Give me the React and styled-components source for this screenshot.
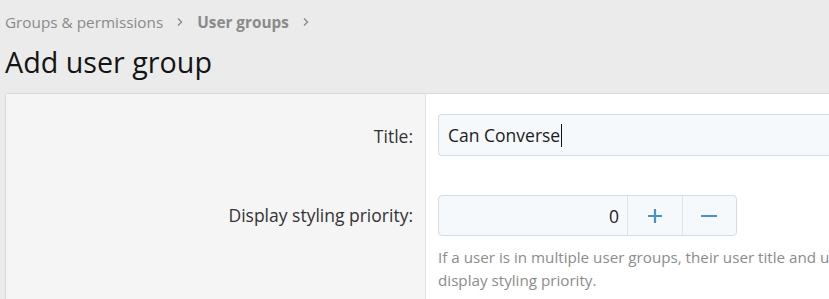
import React from "react";
import styled, { createGlobalStyle } from "styled-components";

const Global = createGlobalStyle`
  html, body { margin: 0; padding: 0; background: #ebebeb; }
  body { font-family: "Open Sans", "Noto Sans", sans-serif; color: #141414; }
`;

const Page = styled.div`
  padding: 11px 0 0 5px;
  width: 829px;
  height: 299px;
  box-sizing: border-box;
  overflow: hidden;
`;

const Crumbs = styled.nav`
  display: flex;
  align-items: center;
  gap: 13px;
  font-size: 15.3px;
  line-height: 22px;
  color: #8a8a8a;
`;

const Crumb = styled.span`
  font-weight: ${(p) => (p.$strong ? 700 : 400)};
`;

const Chevron = () => (
  <svg width="8" height="10" viewBox="0 0 8 10" fill="none">
    <path d="M2 1.5 L5.5 5 L2 8.5" stroke="#8a8a8a" strokeWidth="1.4" />
  </svg>
);

const Title = styled.h1`
  margin: 9px 0 0;
  font-weight: 400;
  font-size: 28.7px;
  line-height: 40px;
  color: #141414;
`;

const Block = styled.div`
  margin-top: 11px;
  border: 1px solid #dadada;
  border-right: none;
  border-radius: 3px 0 0 0;
  background: #fff;
  display: grid;
  grid-template-columns: 420px 1fr;
`;

const Row = styled.div`
  display: contents;
`;

const Label = styled.div`
  background: #f5f5f5;
  border-right: 1px solid #e2e2e2;
  text-align: right;
  padding: ${(p) => p.$pad};
  padding-right: 12px;
  font-size: 17.5px;
  line-height: 24px;
  color: #333;
`;

const Field = styled.div`
  padding: ${(p) => p.$pad};
  padding-left: 12px;
  min-width: 0;
`;

const TextBox = styled.div`
  height: 42px;
  box-sizing: border-box;
  border: 1px solid #d3dde6;
  border-right: none;
  border-radius: 4px 0 0 4px;
  background: #f6f9fc;
  padding: 0 9px;
  display: flex;
  align-items: center;
  font-size: 17.5px;
  color: #1c1c1c;
`;

const Caret = styled.span`
  display: inline-block;
  width: 1px;
  height: 23px;
  background: #111;
  margin-left: 1px;
`;

const NumberGroup = styled.div`
  display: flex;
  width: 299px;
  height: 41px;
  box-sizing: border-box;
  border: 1px solid #d3dde6;
  border-radius: 4px;
  background: #f6f9fc;
  overflow: hidden;
`;

const NumberValue = styled.div`
  flex: 0 0 188px;
  box-sizing: border-box;
  padding-right: 8px;
  display: flex;
  align-items: center;
  justify-content: flex-end;
  font-size: 17.5px;
  color: #1c1c1c;
`;

const StepButton = styled.div`
  flex: 1;
  border-left: 1px solid #dde3e9;
  display: flex;
  align-items: center;
  justify-content: center;
`;

const Hint = styled.div`
  margin-top: 10px;
  font-size: 15.2px;
  line-height: 23px;
  color: #8c8c8c;
  white-space: nowrap;
`;

const Plus = () => (
  <svg width="16" height="16" viewBox="0 0 16 16">
    <path d="M8 1v14M1 8h14" stroke="#4a90c9" strokeWidth="2.2" />
  </svg>
);

const Minus = () => (
  <svg width="18" height="16" viewBox="0 0 18 16">
    <path d="M1 8h16" stroke="#4a90c9" strokeWidth="2.2" />
  </svg>
);

export default function App() {
  return (
    <>
      <Global />
      <Page>
        <Crumbs>
          <Crumb>Groups &amp; permissions</Crumb>
          <Chevron />
          <Crumb $strong>User groups</Crumb>
          <Chevron />
        </Crumbs>
        <Title>Add user group</Title>
        <Block>
          <Row>
            <Label $pad="30px 0 0">Title:</Label>
            <Field $pad="20px 0 0">
              <TextBox>
                Can Converse
                <Caret />
              </TextBox>
            </Field>
          </Row>
          <Row>
            <Label $pad="47px 0 0">Display styling priority:</Label>
            <Field $pad="39px 0 40px">
              <NumberGroup>
                <NumberValue>0</NumberValue>
                <StepButton>
                  <Plus />
                </StepButton>
                <StepButton>
                  <Minus />
                </StepButton>
              </NumberGroup>
              <Hint>
                If a user is in multiple user groups, their user title and user
                banner will come from the group with the highest
                <br />
                display styling priority.
              </Hint>
            </Field>
          </Row>
        </Block>
      </Page>
    </>
  );
}
